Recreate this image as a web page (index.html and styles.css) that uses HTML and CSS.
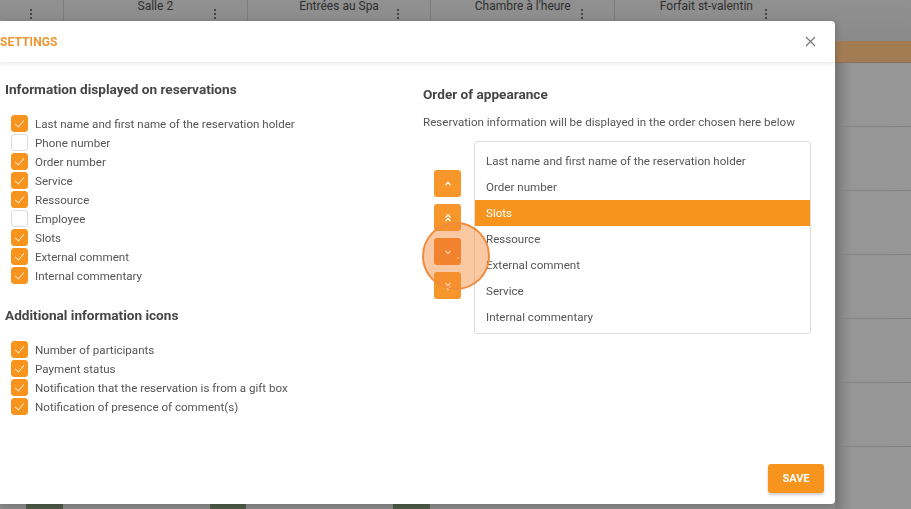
FILE: index.html
```html
<!DOCTYPE html>
<html lang="en">
<head>
  <meta charset="UTF-8">
  <title>Planning - Settings</title>
  <link rel="stylesheet" href="styles.css">
</head>
<body>
  <div class="app">
    <div class="app-header">
      <div class="col col-first"><span class="kebab"></span></div>
      <div class="col"><span class="col-name">Salle 2</span><span class="kebab"></span></div>
      <div class="col"><span class="col-name">Entrées au Spa</span><span class="kebab"></span></div>
      <div class="col"><span class="col-name">Chambre à l'heure</span><span class="kebab"></span></div>
      <div class="col"><span class="col-name">Forfait st-valentin</span><span class="kebab"></span></div>
    </div>
    <div class="day-bar"></div>
    <div class="grid-row"></div>
    <div class="grid-row"></div>
    <div class="grid-row"></div>
    <div class="grid-row"></div>
    <div class="grid-row"></div>
    <div class="grid-row"></div>
    <div class="grid-row events"></div>
  </div>

  <div class="dialog">
    <div class="dialog-header">
      <span class="dialog-title">Settings</span>
      <svg class="close" width="11" height="11" viewBox="0 0 11 11"><path d="M1 1L10 10M10 1L1 10" stroke="#777" stroke-width="1.2" fill="none"/></svg>
    </div>

    <div class="dialog-body">
      <div class="column-left">
        <h2>Information displayed on reservations</h2>
        <ul class="checklist">
          <li><span class="box checked"></span>Last name and first name of the reservation holder</li>
          <li><span class="box"></span>Phone number</li>
          <li><span class="box checked"></span>Order number</li>
          <li><span class="box checked"></span>Service</li>
          <li><span class="box checked"></span>Ressource</li>
          <li><span class="box"></span>Employee</li>
          <li><span class="box checked"></span>Slots</li>
          <li><span class="box checked"></span>External comment</li>
          <li><span class="box checked"></span>Internal commentary</li>
        </ul>

        <h2 class="second">Additional information icons</h2>
        <ul class="checklist">
          <li><span class="box checked"></span>Number of participants</li>
          <li><span class="box checked"></span>Payment status</li>
          <li><span class="box checked"></span>Notification that the reservation is from a gift box</li>
          <li><span class="box checked"></span>Notification of presence of comment(s)</li>
        </ul>
      </div>

      <div class="column-right">
        <h2>Order of appearance</h2>
        <p class="hint">Reservation information will be displayed in the order chosen here below</p>
        <div class="order">
          <div class="order-buttons">
            <button class="move"><svg width="10" height="10" viewBox="0 0 10 10"><path d="M2.5 6L5 3.5L7.5 6" stroke="#fff" stroke-width="1.3" fill="none"/></svg></button>
            <button class="move"><svg width="10" height="10" viewBox="0 0 10 10"><path d="M2.5 4.5L5 2L7.5 4.5M2.5 8L5 5.5L7.5 8" stroke="#fff" stroke-width="1.3" fill="none"/></svg></button>
            <button class="move pressed"><svg width="10" height="10" viewBox="0 0 10 10"><path d="M2.5 4L5 6.5L7.5 4" stroke="#fff" stroke-width="1.3" fill="none"/></svg></button>
            <button class="move"><svg width="10" height="10" viewBox="0 0 10 10"><path d="M2.5 2L5 4.5L7.5 2M2.5 5.5L5 8L7.5 5.5" stroke="#fff" stroke-width="1.3" fill="none"/></svg></button>
          </div>
          <ul class="order-list">
            <li>Last name and first name of the reservation holder</li>
            <li>Order number</li>
            <li class="selected">Slots</li>
            <li>Ressource</li>
            <li>External comment</li>
            <li>Service</li>
            <li>Internal commentary</li>
          </ul>
        </div>
      </div>
    </div>

    <div class="dialog-footer">
      <button class="save">Save</button>
    </div>
  </div>

  <div class="click-ring"><span class="click-dot"></span></div>
</body>
</html>
```

FILE: styles.css
```css
body {
  margin: 0;
  font-family: Roboto, "Liberation Sans", sans-serif;
  background-color: #8f8f8f;
  overflow: hidden;
  width: 911px;
  height: 509px;
}

/* backdrop planning */
.app {
  width: 911px;
  height: 509px;
  overflow: hidden;
  background: linear-gradient(to right, #8d8d8d 835px, #7f7f7f 836px, #969696 852px, #979797);
}
.app-header {
  display: flex;
  height: 41px;
  overflow: hidden;
  background: linear-gradient(#909090, #8a8a8a);
}
.col {
  position: relative;
  width: 183.7px;
  flex-shrink: 0;
  border-left: 1px solid #7d7d7d;
  box-sizing: border-box;
  text-align: center;
  font-size: 12px;
  color: #2e2e2e;
  line-height: 13px;
}
.col-first {
  width: 63px;
  border-left: none;
}
.col-name {
  display: block;
}
.kebab {
  position: absolute;
  right: 31px;
  top: 9px;
  width: 2px;
  height: 2px;
  border-radius: 50%;
  background: #2e2e2e;
  box-shadow: 0 4px 0 #2e2e2e, 0 8px 0 #2e2e2e;
}
.day-bar {
  height: 21px;
  background-color: #a27c53;
  border-bottom: 1px solid #8a7058;
}
.grid-row {
  height: 63px;
  border-bottom: 1px solid #838383;
}
.grid-row.events {
  height: 62px;
  border-bottom: none;
  background:
    linear-gradient(to bottom, transparent 57px, #4f5d49 57px) 26px 0 / 37px 100% no-repeat,
    linear-gradient(to bottom, transparent 57px, #4f5d49 57px) 210px 0 / 36px 100% no-repeat,
    linear-gradient(to bottom, transparent 57px, #4f5d49 57px) 393px 0 / 37px 100% no-repeat;
}

/* dialog */
.dialog {
  position: fixed;
  left: 0;
  top: 21px;
  width: 835px;
  height: 483px;
  background: #fff;
  border-radius: 0 4px 4px 0;
  box-shadow: 0 2px 10px rgba(0, 0, 0, 0.2);
  display: flex;
  flex-direction: column;
}
.dialog-header {
  height: 41px;
  display: flex;
  align-items: center;
  justify-content: space-between;
  padding: 0 19px 0 0;
  box-shadow: 0 2px 4px rgba(0, 0, 0, 0.08);
  position: relative;
}
.dialog-title {
  text-transform: uppercase;
  color: #ef9632;
  font-size: 12px;
  font-weight: 700;
  letter-spacing: 0.1px;
}
.close {
  display: block;
}
.dialog-body {
  flex: 1;
  display: grid;
  grid-template-columns: 418px 388px;
  padding: 19px 24px 0 5px;
}
h2 {
  margin: 0;
  font-size: 13.6px;
  line-height: 16px;
  font-weight: 700;
  color: #454545;
}
h2.second {
  margin-top: 22px;
}
.checklist {
  list-style: none;
  margin: 17px 0 0;
  padding: 0 0 0 6px;
}
.checklist li {
  display: flex;
  align-items: center;
  height: 19px;
  font-size: 11.6px;
  color: #555;
}
.box {
  width: 17px;
  height: 17px;
  border: 1px solid #ddd;
  border-radius: 3px;
  box-sizing: border-box;
  margin-right: 7px;
  background: #fff;
  position: relative;
}
.box.checked {
  background: #f7941d;
  border-color: #f7941d;
}
.box.checked::after {
  content: "";
  position: absolute;
  left: 5px;
  top: 2px;
  width: 4px;
  height: 8px;
  border: solid #fde1bf;
  border-width: 0 1px 1px 0;
  transform: rotate(40deg);
}
.column-right {
  padding-top: 5px;
}
.hint {
  margin: 11px 0 0;
  font-size: 11.6px;
  line-height: 19px;
  color: #555;
}
.order {
  display: flex;
  align-items: center;
  margin-top: 9px;
  padding-left: 11px;
}
.order-buttons {
  display: flex;
  flex-direction: column;
  gap: 7px;
  margin-right: 13px;
  margin-top: -6px;
}
.move {
  width: 27px;
  height: 27px;
  padding: 0;
  border: none;
  border-radius: 3px;
  background-color: #f7962b;
  display: flex;
  align-items: center;
  justify-content: center;
}
.move.pressed {
  background-color: #f07f2a;
}
.order-list {
  list-style: none;
  margin: 0;
  padding: 6px 0 3px;
  width: 337px;
  border: 1px solid #dedede;
  border-radius: 3px;
}
.order-list li {
  height: 26px;
  line-height: 26px;
  padding-left: 11px;
  font-size: 11.6px;
  color: #555;
}
.order-list li.selected {
  background-color: #f7941d;
  color: #fff;
}
.dialog-footer {
  display: flex;
  justify-content: flex-end;
  padding: 0 11px 11px;
}
.save {
  width: 56px;
  height: 29px;
  border: none;
  border-radius: 3px;
  background-color: #f7941d;
  color: #fff;
  font-family: Roboto, "Liberation Sans", sans-serif;
  font-size: 11px;
  font-weight: 700;
  text-transform: uppercase;
  box-shadow: 0 2px 3px rgba(0, 0, 0, 0.2);
}

/* click highlight */
.click-ring {
  position: fixed;
  left: 422px;
  top: 222px;
  width: 64px;
  height: 64px;
  border: 2px solid #f08c3b;
  border-radius: 50%;
  background: rgba(244, 135, 50, 0.45);
}
.click-dot {
  position: absolute;
  left: 33px;
  top: 33px;
  width: 2px;
  height: 2px;
  border-radius: 50%;
  background: #f9b47c;
}
```
